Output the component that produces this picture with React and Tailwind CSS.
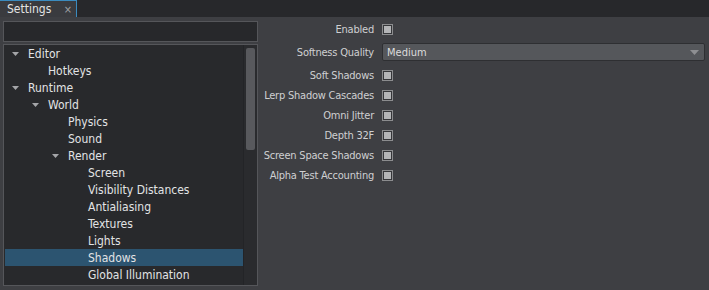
import React from "react";

const tree = [
  { label: "Editor", level: 0, arrow: true },
  { label: "Hotkeys", level: 1 },
  { label: "Runtime", level: 0, arrow: true },
  { label: "World", level: 1, arrow: true },
  { label: "Physics", level: 2 },
  { label: "Sound", level: 2 },
  { label: "Render", level: 2, arrow: true },
  { label: "Screen", level: 3 },
  { label: "Visibility Distances", level: 3 },
  { label: "Antialiasing", level: 3 },
  { label: "Textures", level: 3 },
  { label: "Lights", level: 3 },
  { label: "Shadows", level: 3, selected: true },
  { label: "Global Illumination", level: 3 },
];

const padClass = ["pl-[7px]", "pl-[27px]", "pl-[47px]", "pl-[67px]"];

function Arrow() {
  return (
    <svg width="7" height="4" viewBox="0 0 7 4" className="block">
      <path d="M0 0 L7 0 L3.5 4 Z" fill="#a4a5a8" />
    </svg>
  );
}

function Check() {
  return (
    <div className="w-[11px] h-[11px] border border-[#8b8c8e] bg-[#36373a] p-[1px]">
      <div className="w-full h-full bg-[#b4b5b7]" />
    </div>
  );
}

function Row({ label, children, h = "h-[20px]" }) {
  return (
    <div className={`flex items-center ${h}`}>
      <div className="w-[116px] text-right text-[#cfd0d2] whitespace-nowrap tracking-[-0.22px]">{label}</div>
      <div className="ml-[8px] flex items-center flex-1">{children}</div>
    </div>
  );
}

export default function App() {
  return (
    <div
      className="w-[709px] h-[290px] bg-[#3e3f43] flex flex-col overflow-hidden text-[11px] leading-none"
      style={{ fontFamily: "Tahoma, 'DejaVu Sans Condensed', 'DejaVu Sans', sans-serif" }}
    >
      <div className="h-[17px] bg-[#27282b] flex shrink-0">
        <div className="w-[77px] h-[17px] bg-[#3a3b3f] border-t border-r border-[#3b8bbf] flex items-center pl-[7px] pr-[4px] text-[#e4e4e4] text-[12px]">
          <span className="flex-1">Settings</span>
          <span className="text-[#9fa0a3] text-[11px]">×</span>
        </div>
      </div>
      <div className="flex flex-1 min-h-0">
        <div className="w-[255px] ml-[3px] flex flex-col shrink-0 pt-[4px] pb-[4px]">
          <div className="h-[21px] bg-[#27282b] border border-[#55565a] shrink-0" />
          <div className="mt-[2px] flex-1 bg-[#28292c] border border-[#55565a] flex min-h-0">
            <div className="flex-1 pl-[1px] flex flex-col">
              {tree.map((r) => (
                <div
                  key={r.label}
                  className={`h-[17px] flex items-center ${padClass[r.level]} text-[12px] text-[#e2e3e5] ${
                    r.selected ? "bg-[#2c5470]" : ""
                  }`}
                >
                  <div className="w-[16px] flex items-center">{r.arrow ? <Arrow /> : null}</div>
                  <span>{r.label}</span>
                </div>
              ))}
            </div>
            <div className="w-[14px] bg-[#2a2b2e] border-l border-[#232427] pl-[2px] pt-[3px]">
              <div className="w-[9px] h-[102px] rounded-[2px] bg-[#58595d]" />
            </div>
          </div>
        </div>
        <div className="flex-1 flex flex-col pt-[2px]">
          <Row label="Enabled">
            <Check />
          </Row>
          <Row label="Softness Quality" h="h-[26px]">
            <div className="flex-1 mr-[4px] h-[18px] bg-[#55575b] border border-[#2e2f32] rounded-[2px] flex items-center pl-[4px] pr-[5px] text-[#dcdcdd]">
              <span className="flex-1">Medium</span>
              <svg width="9" height="5" viewBox="0 0 9 5">
                <path d="M0 0 L9 0 L4.5 5 Z" fill="#8e8f92" />
              </svg>
            </div>
          </Row>
          <Row label="Soft Shadows">
            <Check />
          </Row>
          <Row label="Lerp Shadow Cascades">
            <Check />
          </Row>
          <Row label="Omni Jitter">
            <Check />
          </Row>
          <Row label="Depth 32F">
            <Check />
          </Row>
          <Row label="Screen Space Shadows">
            <Check />
          </Row>
          <Row label="Alpha Test Accounting">
            <Check />
          </Row>
        </div>
      </div>
    </div>
  );
}
